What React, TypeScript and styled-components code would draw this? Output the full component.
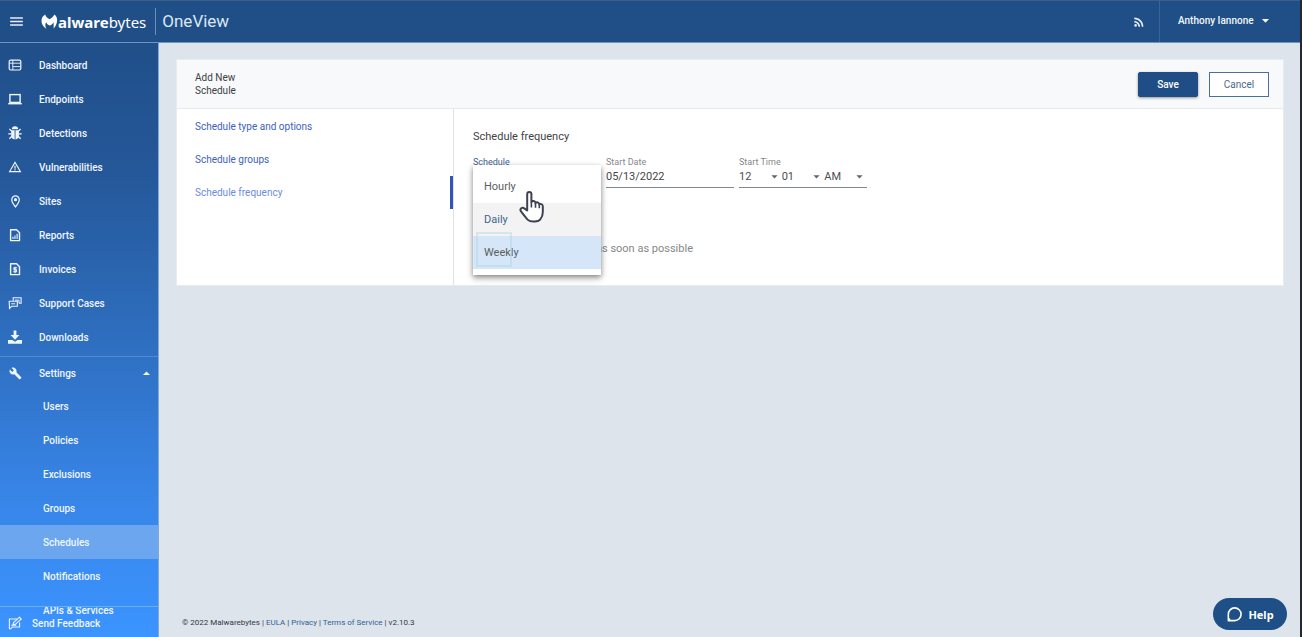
import React from "react";
import styled, { createGlobalStyle, css } from "styled-components";
import { MdBuild, MdRssFeed, MdMenu, MdWarningAmber, MdOutlineLocationOn, MdArrowDropDown, MdArrowDropUp } from "react-icons/md";

const Global = createGlobalStyle`
  *, *::before, *::after { box-sizing: border-box; }
  html, body, #root { height: 100%; margin: 0; }
  body { background: #dde4ec; color: #444; font-family: Roboto, "Liberation Sans", sans-serif; font-size: 10px; }
  a { text-decoration: none; color: inherit; }
  button, input, select { font: inherit; color: inherit; }
`;

const Page = styled.div`
  display: flex;
  flex-direction: column;
  height: 100vh;
  border-right: 2px solid #24282d;
  overflow: hidden;
`;

const TopBar = styled.header`
  display: flex;
  align-items: stretch;
  flex: none;
  height: 43px;
  background: #204f87;
  border-top: 1px solid #3d5f86;
  border-bottom: 1px solid #6f94c0;
  color: #fff;
`;

const MenuButton = styled.button`
  width: 33px;
  padding: 0;
  border: 0;
  background: none;
  color: #e6eef8;
  display: flex;
  align-items: center;
  justify-content: center;
`;

const Brand = styled.a`
  display: flex;
  align-items: center;
  padding-left: 8px;
  font-family: "Noto Sans", "Open Sans", sans-serif;
  font-size: 15px;
  line-height: 24px;
`;

const Strong = styled.span`
  font-weight: 700;
`;

const Product = styled.span`
  align-self: center;
  margin-left: 9px;
  padding-left: 6px;
  border-left: 1px solid #6b8fbd;
  font-size: 17px;
  line-height: 27px;
  color: #dbe7f5;
`;

const FeedButton = styled(MenuButton)`
  width: 40px;
  margin-left: auto;
`;

const Account = styled.button`
  display: flex;
  align-items: center;
  gap: 3px;
  width: 141px;
  padding: 0 0 2px 18px;
  border: 0;
  border-left: 1px solid #3b659a;
  background: none;
  font-weight: 500;
  color: #f2f7fd;
  white-space: nowrap;
`;

const Body = styled.div`
  display: flex;
  flex: 1;
  min-height: 0;
`;

const Sidebar = styled.nav`
  display: flex;
  flex-direction: column;
  flex: none;
  width: 159px;
  border-right: 1px solid #7ea9dd;
  background: linear-gradient(#204f89 0%, #25589a 22%, #2f70c2 52%, #3784e6 75%, #3b94ff 100%);
  color: #f0f6ff;
  font-weight: 500;
`;

const MenuArea = styled.div`
  flex: 1;
  min-height: 0;
  padding-top: 5px;
`;

const NavList = styled.ul`
  list-style: none;
  margin: 0;
  padding: 0 0 2px;
`;

const NavLink = styled.a`
  display: flex;
  align-items: center;
  height: 34px;
  padding-left: 7px;
  gap: 16px;
`;

const IconSlot = styled.span`
  display: flex;
  align-items: center;
  justify-content: center;
  width: 16px;
  height: 16px;
`;

const GroupToggle = styled.button`
  display: flex;
  align-items: center;
  width: 100%;
  height: 33px;
  padding: 0 3px 0 7px;
  gap: 16px;
  border: 0;
  border-top: 1px solid #5289d2;
  background: none;
  text-align: left;

  & > :last-child { margin-left: auto; }
`;

const SubLink = styled.a<{ $active?: boolean }>`
  display: flex;
  align-items: center;
  height: 34px;
  padding-left: 43px;
  ${(p) => p.$active && css`background: #6ca6ef;`}
`;

const Feedback = styled.a`
  display: flex;
  flex: none;
  align-items: center;
  height: 31px;
  padding: 2px 0 0 7px;
  gap: 9px;
  border-top: 1px solid #69adff;
`;

const Content = styled.main`
  display: flex;
  flex-direction: column;
  flex: 1;
  min-width: 0;
  padding: 16px 16px 0 17px;
`;

const Card = styled.section`
  background: #fff;
  border: 1px solid #e8ecf0;
`;

const CardHead = styled.header`
  display: flex;
  align-items: center;
  gap: 11px;
  height: 49px;
  padding: 0 14px 0 18px;
  background: #f7f9fb;
  border-bottom: 1px solid #e6e9ed;
`;

const CardTitle = styled.h1`
  width: 60px;
  margin: 0 auto 0 0;
  font-size: 10px;
  line-height: 13px;
  font-weight: 400;
  color: #3c4043;
`;

const Action = styled.button<{ $primary?: boolean }>`
  width: 60px;
  height: 25px;
  padding: 0;
  border: 1px solid #4a6f9d;
  background: #fff;
  color: #4b6a90;
  ${(p) => p.$primary && css`
    border-color: #1f4d85;
    border-radius: 2px;
    background: #1f4d85;
    color: #fff;
    font-weight: 500;
    box-shadow: 0 1px 3px rgba(0, 0, 0, 0.4);
  `}
`;

const CardBody = styled.div`
  display: flex;
  min-height: 176px;
`;

const Steps = styled.nav`
  flex: none;
  width: 277px;
  padding-top: 1px;
  border-right: 1px solid #dfe2e6;
`;

const Step = styled.a<{ $active?: boolean }>`
  display: flex;
  align-items: center;
  height: 33px;
  padding-left: 18px;
  color: #3d62bd;
  ${(p) => p.$active && css`
    color: #6b8be0;
    border-right: 3px solid #2f56b8;
  `}
`;

const Form = styled.form`
  flex: 1;
  padding: 21px 19px 0;
`;

const FormTitle = styled.h2`
  margin: 0 0 13px;
  font-size: 11px;
  line-height: 14px;
  font-weight: 400;
  color: #3f4245;
`;

const Fields = styled.div`
  display: grid;
  grid-template-columns: repeat(3, 128px);
  gap: 5px;
`;

const Field = styled.div`
  position: relative;
`;

const Label = styled.label<{ $focus?: boolean }>`
  display: block;
  height: 10px;
  font-size: 9px;
  line-height: 10px;
  color: ${(p) => (p.$focus ? "#426491" : "#85888b")};
`;

const Line = styled.div`
  display: flex;
  align-items: flex-start;
  height: 21px;
  border-bottom: 1px solid #85888b;
  font-size: 11px;
`;

const TextBox = styled.input`
  width: 100%;
  height: 18px;
  padding: 0;
  border: 0;
  background: none;
  outline: 0;
`;

const SelectWrap = styled.span`
  display: grid;
  flex: 1;
  align-items: center;
  color: #4b4e51;

  & > * { grid-area: 1 / 1; }
  & > svg { justify-self: end; pointer-events: none; color: #666; }
`;

const Select = styled.select`
  appearance: none;
  width: 100%;
  height: 18px;
  padding: 0;
  border: 0;
  background: none;
  outline: 0;
`;

const Menu = styled.div`
  position: absolute;
  top: 8px;
  left: 0;
  width: 128px;
  padding: 5px 0 6px;
  background: #fff;
  box-shadow: 0 2px 5px rgba(0, 0, 0, 0.4), 0 4px 8px rgba(0, 0, 0, 0.14);
`;

const Option = styled.button<{ $tone?: "selected" | "hover" }>`
  display: block;
  width: 100%;
  height: 33px;
  padding: 0 11px;
  border: 0;
  background: #fff;
  color: #5b5e61;
  font-size: 11px;
  text-align: left;
  ${(p) => p.$tone === "selected" && css`background: #f3f3f3; color: #426491;`}
  ${(p) => p.$tone === "hover" && css`background: #d5e6f8;`}
`;

const FocusRing = styled.span`
  position: absolute;
  left: 3px;
  bottom: 8px;
  width: 36px;
  height: 35px;
  border: 2px solid rgba(168, 212, 226, 0.4);
  pointer-events: none;
`;

const Pointer = styled.svg`
  position: absolute;
  left: 45px;
  top: 33px;
`;

const Note = styled.p`
  margin: 54px 0 0 123px;
  font-size: 11px;
  line-height: 14px;
  color: #85888b;
`;

const Footer = styled.footer`
  margin-top: auto;
  padding: 0 0 8px 6px;
  font-size: 8px;
  line-height: 12px;
  color: #34383d;

  a { color: #335d94; }
`;

const HelpButton = styled.button`
  position: fixed;
  right: 15px;
  bottom: 7px;
  display: flex;
  align-items: center;
  justify-content: center;
  gap: 5px;
  width: 74px;
  height: 32px;
  border: 0;
  border-radius: 16px;
  background: #1f4f87;
  color: #fff;
  font-family: "Noto Sans", sans-serif;
  font-size: 11px;
  font-weight: 700;
`;

const Svg = ({ children, size = 16 }: { children: React.ReactNode; size?: number }) => (
  <svg width={size} height={size} viewBox="0 0 16 16" fill="none" stroke="currentColor" strokeWidth="1.4" aria-hidden="true">
    {children}
  </svg>
);

const LogoMark = () => (
  <svg width="17" height="16" viewBox="0 0 17 16" aria-label="M" role="img">
    <path
      fill="#fff"
      d="M4.2 0.6 C4.7 2.8 6.3 4.2 8.5 5.2 C10.7 4.2 12.4 2.8 13.3 0.6 C15.6 2.2 16.5 4.6 16 7.5 C15.6 10.3 14.5 12.6 12.6 14.4 L12.7 8.2 C11.5 10 10.1 11.3 8.5 11.6 C7.2 11.2 6.1 10 5.2 8.3 C4.1 9.6 4 11.7 5.2 14.7 C2 12.7 0.4 9.9 0.5 6.6 C0.6 4 1.9 2 4.2 0.6 Z"
    />
  </svg>
);

const mainItems: { label: string; icon: React.ReactNode }[] = [
  {
    label: "Dashboard",
    icon: <Svg><rect x="2.2" y="3.2" width="11.6" height="9.8" rx="1.4" strokeWidth="1.2" /><path d="M5.8 3v10M2.5 6.2h11.3M6 9.6h7.8" strokeWidth="0.9" /></Svg>,
  },
  {
    label: "Endpoints",
    icon: <Svg><rect x="2.9" y="3.6" width="10.2" height="7.8" /><path d="M1.2 12.7h13.6" /></Svg>,
  },
  {
    label: "Detections",
    icon: (
      <Svg>
        <path d="M4.8 4.2a3.2 3 0 0 1 6.4 0z" fill="currentColor" stroke="none" />
        <path d="M4.2 5.2h3.4v9.3c-2.2-.3-3.4-1.8-3.4-3.8zM8.5 5.2h3.4v5.5c0 2-1.2 3.5-3.4 3.8z" fill="currentColor" stroke="none" />
        <path d="M4.8 6.4 2.4 4M11.2 6.4 13.6 4M4.5 8.9H1.3M11.5 8.9h3.2M4.8 11.2l-2.4 2.5M11.2 11.2l2.4 2.5" strokeWidth="1.3" />
      </Svg>
    ),
  },
  { label: "Vulnerabilities", icon: <MdWarningAmber size={14} /> },
  { label: "Sites", icon: <MdOutlineLocationOn size={15} /> },
  {
    label: "Reports",
    icon: <Svg><path d="M3.6 2.7h6l2.9 3v7.9H3.6z" strokeLinejoin="round" /><path d="M6 11.9V9.8M8 11.9V8.6M10.1 11.9V6.8" strokeWidth="1.1" /></Svg>,
  },
  {
    label: "Invoices",
    icon: <Svg><path d="M3.6 2.7h6l2.9 3v7.9H3.6z" strokeLinejoin="round" /><path d="M10.1 6.8H7v2h2.4v2H6.1M8.1 5.7v6.5" strokeWidth="1.1" /></Svg>,
  },
  {
    label: "Support Cases",
    icon: (
      <Svg>
        <path d="M6.2 5.7V2.8h7.9v5.4h-2.3" strokeWidth="1.1" />
        <path d="M2.2 6.3h8.1v5H4.6l-2.1 2.2z" strokeWidth="1.1" />
        <path d="M4.2 8.8h4M8 5.1h4v3" strokeWidth="1" />
      </Svg>
    ),
  },
  {
    label: "Downloads",
    icon: (
      <Svg>
        <path d="M6.6 1.6h2.8v4.5h3L8 10.7 3.6 6.1h3z" fill="currentColor" stroke="none" />
        <path d="M1 11h4.4L8 12.7 10.6 11H15v3.8H1z" fill="currentColor" stroke="none" />
      </Svg>
    ),
  },
];

const subItems = ["Users", "Policies", "Exclusions", "Groups", "Schedules", "Notifications", "APIs & Services"];

const timeParts = [
  { name: "Hour", value: "12" },
  { name: "Minute", value: "01" },
  { name: "Period", value: "AM" },
];

export default function App() {
  return (
    <>
      <Global />
      <Page>
        <TopBar>
          <MenuButton aria-label="Toggle menu"><MdMenu size={17} /></MenuButton>
          <Brand href="#">
            <LogoMark />
            <span><Strong>alware</Strong>bytes</span>
          </Brand>
          <Product>OneView</Product>
          <FeedButton aria-label="News feed"><MdRssFeed size={14} /></FeedButton>
          <Account>Anthony Iannone<MdArrowDropDown size={17} /></Account>
        </TopBar>
        <Body>
          <Sidebar>
            <MenuArea>
              <NavList>
                {mainItems.map((item) => (
                  <li key={item.label}>
                    <NavLink href="#"><IconSlot>{item.icon}</IconSlot>{item.label}</NavLink>
                  </li>
                ))}
              </NavList>
              <GroupToggle aria-expanded="true">
                <IconSlot><MdBuild size={13} /></IconSlot>
                Settings
                <MdArrowDropUp size={17} />
              </GroupToggle>
              <NavList>
                {subItems.map((label) => (
                  <li key={label}><SubLink href="#" $active={label === "Schedules"}>{label}</SubLink></li>
                ))}
              </NavList>
            </MenuArea>
            <Feedback href="#">
              <IconSlot>
                <Svg>
                  <path d="M9.8 4H2.4v9.7h1.5L5.3 12h7.3V7.6" strokeWidth="1.1" />
                  <path d="M6 9.8l.5-2.3 6-5.3 1.8 1.8-6 5.3z" strokeWidth="1.1" />
                  <path d="M4.3 10.2h5" strokeWidth="1" />
                </Svg>
              </IconSlot>
              Send Feedback
            </Feedback>
          </Sidebar>
          <Content>
            <Card>
              <CardHead>
                <CardTitle>Add New Schedule</CardTitle>
                <Action $primary>Save</Action>
                <Action>Cancel</Action>
              </CardHead>
              <CardBody>
                <Steps>
                  <Step href="#">Schedule type and options</Step>
                  <Step href="#">Schedule groups</Step>
                  <Step href="#" $active>Schedule frequency</Step>
                </Steps>
                <Form>
                  <FormTitle>Schedule frequency</FormTitle>
                  <Fields>
                    <Field>
                      <Label htmlFor="schedule" $focus>Schedule</Label>
                      <Line>
                        <SelectWrap>
                          <Select id="schedule" defaultValue="Daily">
                            <option>Daily</option>
                          </Select>
                        </SelectWrap>
                      </Line>
                      <Menu role="listbox" aria-label="Schedule">
                        <Option type="button" role="option">Hourly</Option>
                        <Option type="button" role="option" $tone="selected">Daily</Option>
                        <Option type="button" role="option" $tone="hover">Weekly</Option>
                        <FocusRing />
                      </Menu>
                      <Pointer width="28" height="34" viewBox="0 0 28 34" aria-hidden="true">
                        <path
                          d="M9.2 20.5V4.2C9.2 1.2 13.4 1.2 13.4 4.2V12C14.6 10.4 17.2 10.8 17.5 13C18.8 11.8 21 12.4 21.3 14.2C23 13.4 24.8 14.4 24.8 16.4V22C24.8 26 23.6 27.8 22.4 29.2C20.8 31.8 12.8 32.8 9.6 29.6C7.6 27.4 5.2 24.2 3 21.4C1.2 18.6 4.4 16.8 6.3 18.4Z"
                          fill="#fff"
                          stroke="#3d4152"
                          strokeWidth="2"
                          strokeLinejoin="round"
                        />
                        <path d="M13.4 12v5.4M17.5 13v4.8M21.3 14.2v4" stroke="#3d4152" strokeWidth="1.6" />
                      </Pointer>
                    </Field>
                    <Field>
                      <Label htmlFor="start-date">Start Date</Label>
                      <Line><TextBox id="start-date" defaultValue="05/13/2022" /></Line>
                    </Field>
                    <Field>
                      <Label htmlFor="start-Hour">Start Time</Label>
                      <Line>
                        {timeParts.map((part) => (
                          <SelectWrap key={part.name}>
                            <Select id={`start-${part.name}`} aria-label={part.name} defaultValue={part.value}>
                              <option>{part.value}</option>
                            </Select>
                            <MdArrowDropDown size={15} />
                          </SelectWrap>
                        ))}
                      </Line>
                    </Field>
                  </Fields>
                  <Note>as soon as possible</Note>
                </Form>
              </CardBody>
            </Card>
            <Footer>
              © 2022 Malwarebytes | <a href="#">EULA</a> | <a href="#">Privacy</a> | <a href="#">Terms of Service</a> | v2.10.3
            </Footer>
          </Content>
        </Body>
      </Page>
      <HelpButton>
        <Svg size={17}><path d="M2.2 14V8A6 6 0 1 1 8.2 13.8H2.2L3.6 11.8" strokeWidth="1.5" strokeLinejoin="round" /></Svg>
        Help
      </HelpButton>
    </>
  );
}
